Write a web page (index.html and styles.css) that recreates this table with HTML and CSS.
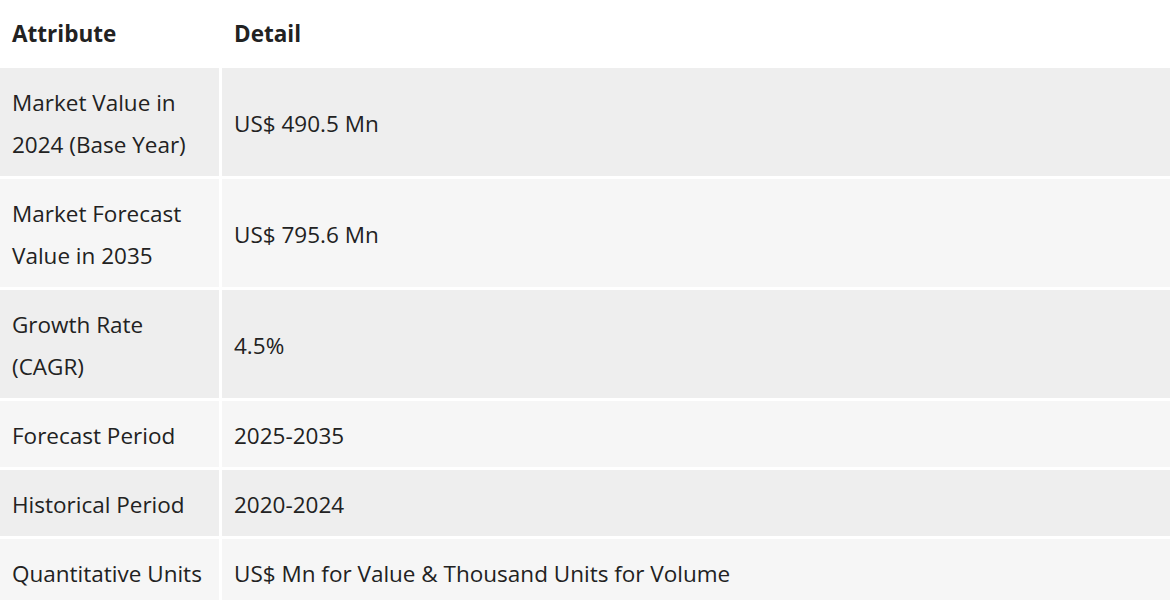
FILE: index.html
```html
<!DOCTYPE html>
<html>
<head>
<meta charset="utf-8">
<link rel="stylesheet" href="styles.css">
</head>
<body>
<table class="spec">
  <thead>
    <tr><th class="c1">Attribute</th><th>Detail</th></tr>
  </thead>
  <tbody>
    <tr class="odd"><td class="c1">Market Value in 2024 (Base Year)</td><td>US$ 490.5 Mn</td></tr>
    <tr class="even"><td class="c1">Market Forecast Value in 2035</td><td>US$ 795.6 Mn</td></tr>
    <tr class="odd"><td class="c1">Growth Rate (CAGR)</td><td>4.5%</td></tr>
    <tr class="even"><td class="c1">Forecast Period</td><td>2025-2035</td></tr>
    <tr class="odd"><td class="c1">Historical Period</td><td>2020-2024</td></tr>
    <tr class="even"><td class="c1">Quantitative Units</td><td>US$ Mn for Value &amp; Thousand Units for Volume</td></tr>
  </tbody>
</table>
</body>
</html>
```
FILE: styles.css
```css
html, body {
  margin: 0;
  padding: 0;
  background: #fff;
}
.spec {
  width: 1170px;
  border-collapse: separate;
  border-spacing: 0;
  font-family: "Open Sans", "Noto Sans", sans-serif;
  font-size: 22.5px;
  line-height: 42px;
  color: #222;
}
.spec th, .spec td {
  padding: 14px 12px 10px;
  text-align: left;
  vertical-align: middle;
}
.spec th {
  font-weight: 700;
  padding-top: 13px;
  padding-bottom: 10px;
}
.spec td {
  border-top: 3px solid #fff;
}
.spec .c1 {
  width: 195px;
  border-right: 3px solid #fff;
}
.odd td { background: #eeeeee; }
.even td { background: #f6f6f6; }
```
